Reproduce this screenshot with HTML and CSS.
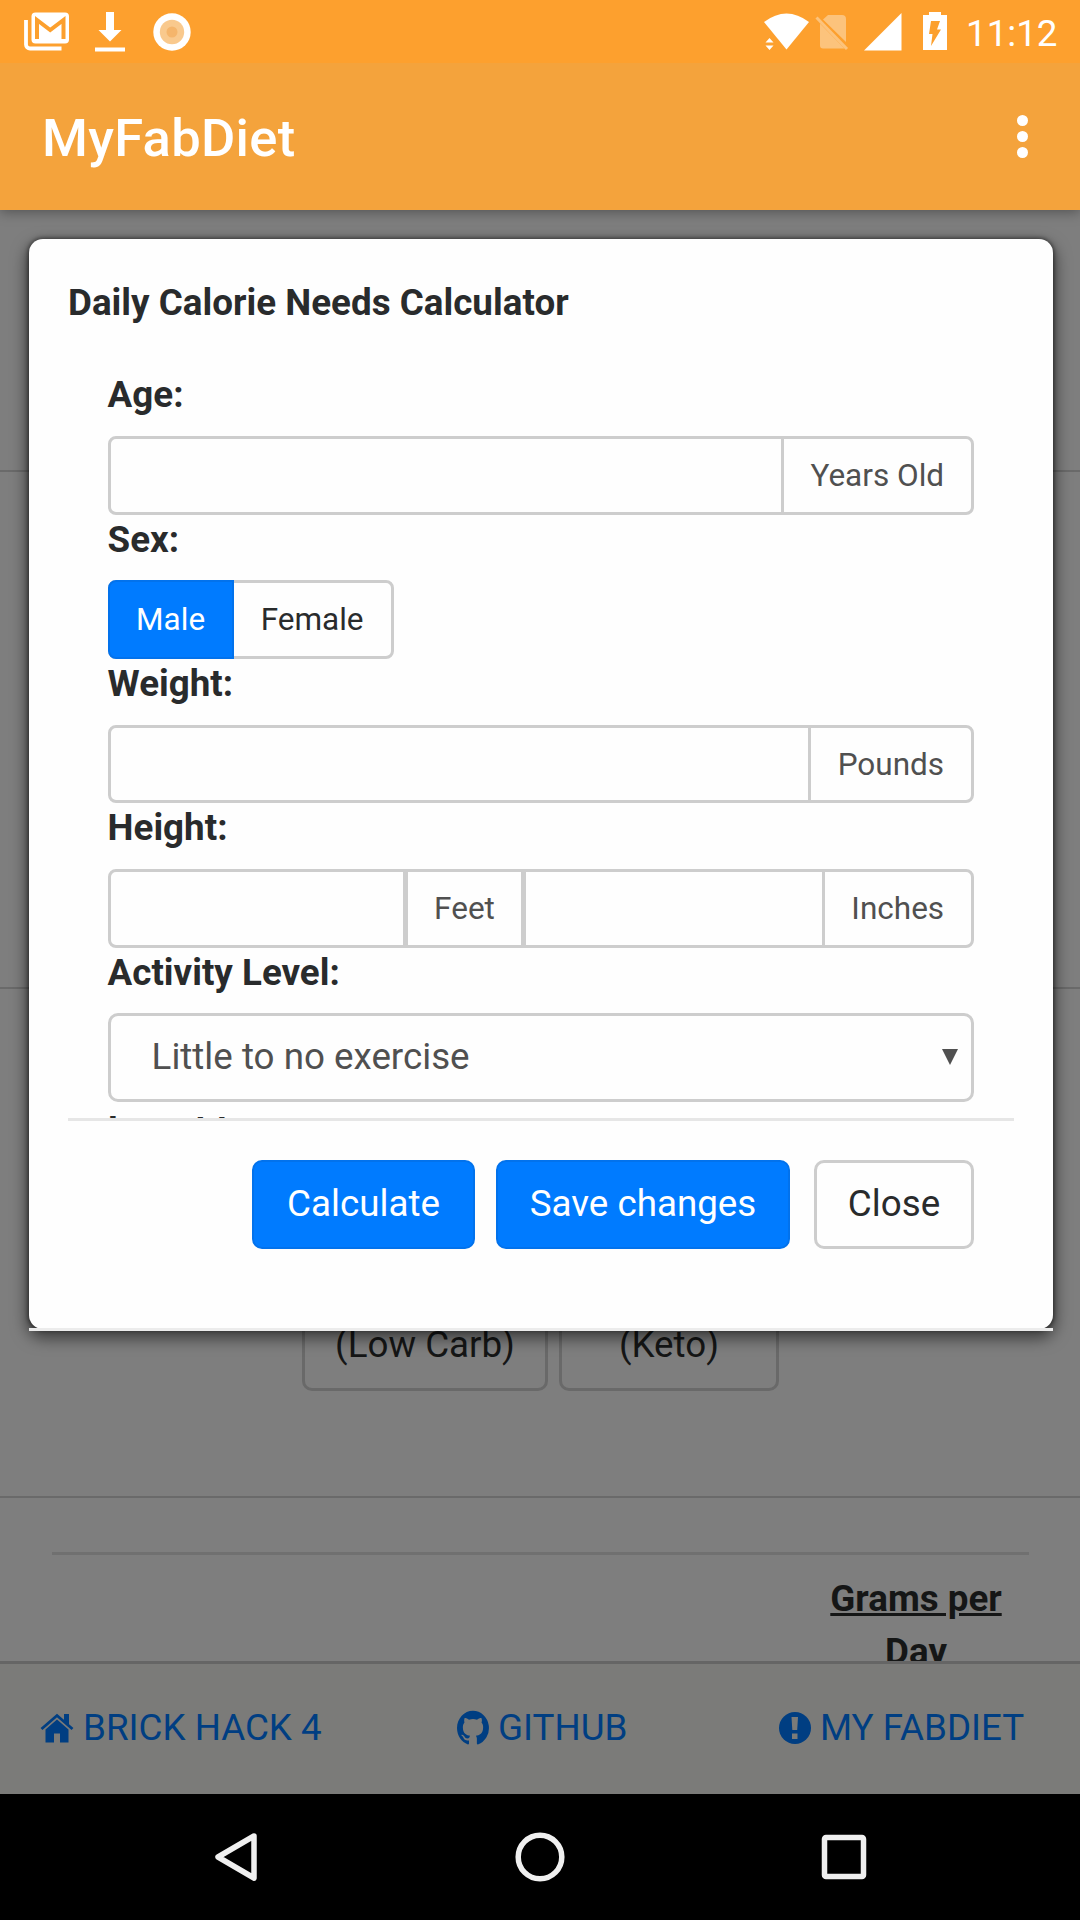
FILE: index.html
```html
<!DOCTYPE html>
<html lang="en">
<head>
<meta charset="utf-8">
<title>MyFabDiet</title>
<link rel="stylesheet" href="styles.css">
</head>
<body>
<div class="screen">
  <div class="status-bar">
    <div class="status-left">
      <svg class="icon-mail" width="46" height="40" viewBox="0 0 46 40">
        <path d="M2 8v24.500a4 4 0 0 0 4 4h31.500" fill="none" stroke="#fff" stroke-width="3.800"/>
        <rect x="7.500" y="0.500" width="37.500" height="31" rx="4" fill="#fff"/>
        <path d="M13 27V8l13.200 10L39.500 8v19" fill="none" stroke="#fca02e" stroke-width="4"/>
        <path d="M13 4.500h26.500L26.200 13.500z" fill="#fff"/>
      </svg>
      <svg class="icon-download" width="30" height="40" viewBox="0 0 30 40">
        <path d="M11 0h8v18h7.500L15 29.500 3.500 18H11zM0 35.500h30v4H0z" fill="#fff"/>
      </svg>
      <svg class="icon-record" width="38" height="38" viewBox="0 0 38 38">
        <circle cx="19" cy="19" r="18.700" fill="#fff"/>
        <circle cx="19" cy="19" r="12.200" fill="#f9c98d"/>
        <circle cx="19" cy="19" r="5.500" fill="#f5b56b"/>
      </svg>
    </div>
    <div class="status-right">
      <svg width="46" height="38" viewBox="0 0 46 38">
        <path d="M0 9Q22.500-8 45 9L22.500 36.500z" fill="#fff"/>
        <path d="M5.500 23l-6 6v8h9l3-4z" fill="#fca02e"/>
        <path d="M5.500 25l4 4.500h-8zM5.500 37l4-4.500h-8z" fill="#fff"/>
      </svg>
      <svg class="icon-nosim" width="34" height="38" viewBox="0 0 34 38">
        <path d="M13 2h14a4 4 0 0 1 4 4v23L8 6.500zM5 10.500l24.500 25H8a3 3 0 0 1-3-3z" fill="#fcc37c"/>
        <path d="M1.500 4.500L32 36" stroke="#fcc37c" stroke-width="3"/>
      </svg>
      <svg class="icon-signal" width="38" height="38" viewBox="0 0 38 38"><path d="M0 37.500L37.500 0v37.500z" fill="#fff"/></svg>
      <svg class="icon-battery" width="24" height="38" viewBox="0 0 24 38">
        <path d="M6 0h12v3h6v35H0V3h6z" fill="#fff"/>
        <path d="M8 9h9l-3 8.500h4L8 34l1.500-12H6z" fill="#fca02e"/>
      </svg>
      <span class="clock">11:12</span>
    </div>
  </div>

  <header class="app-bar">
    <h1 class="app-title">MyFabDiet</h1>
    <div class="overflow-menu"><i></i><i></i><i></i></div>
  </header>

  <main class="viewport">
    <div class="page">
      <section class="panel panel-intro"></section>
      <section class="panel panel-form"></section>
      <section class="panel panel-diets">
        <div class="diet">(Low Carb)</div>
        <div class="diet diet-keto">(Keto)</div>
      </section>
      <section class="results">
        <div class="grams">Grams per<br>Day</div>
      </section>
    </div>
    <footer class="page-footer">
      <a class="link"><svg width="34" height="34" viewBox="0 0 34 34"><path d="M17 8.500L28.500 18.500v13H20V22.500h-6v9H5.500v-13z"/><path d="M1.500 18L17 4.500l15.500 13.500" fill="none" stroke="#003e82" stroke-width="2.800"/><path d="M24 3h5v11l-5-4.500z"/></svg><span>BRICK HACK 4</span></a>
      <a class="link link-github"><svg width="32" height="36" viewBox="0 0 24 25" preserveAspectRatio="none"><path d="M12 .5C5.400.5 0 5.900 0 12.500c0 5.300 3.400 9.800 8.200 11.400.6.100.8-.3.800-.6v-2.200c-3.300.7-4-1.400-4-1.400-.6-1.400-1.400-1.800-1.400-1.800-1-.7.100-.7.100-.7 1.200.1 1.900 1.200 1.900 1.200 1 1.900 2.800 1.300 3.500 1 .1-.8.400-1.300.8-1.600-2.700-.3-5.500-1.300-5.500-5.900 0-1.300.5-2.400 1.200-3.200-.1-.3-.5-1.500.1-3.200 0 0 1-.3 3.300 1.200a11.500 11.500 0 0 1 6 0c2.300-1.500 3.300-1.200 3.300-1.200.7 1.700.2 2.900.1 3.200.8.800 1.200 1.900 1.200 3.200 0 4.600-2.800 5.600-5.500 5.900.4.400.8 1.100.8 2.200v3.300c0 .3.200.7.800.6A12 12 0 0 0 12 .5z"/></svg><span>GITHUB</span></a>
      <a class="link link-about"><svg width="32" height="34" viewBox="0 0 32 34"><circle cx="16" cy="17" r="16"/><path d="M12.500 6h6.500l-.8 13h-4.900zM13 22.500h5.500v5.500H13z" fill="#7b7b79"/></svg><span>MY FABDIET</span></a>
    </footer>

    <div class="modal">
      <h2 class="modal-title">Daily Calorie Needs Calculator</h2>
      <form class="modal-body">
        <label>Age:</label>
        <div class="group"><input type="text"><span class="addon">Years Old</span></div>
        <label>Sex:</label>
        <div class="group toggle"><span class="option active">Male</span><span class="option female">Female</span></div>
        <label>Weight:</label>
        <div class="group"><input type="text"><span class="addon">Pounds</span></div>
        <label>Height:</label>
        <div class="group"><input class="feet" type="text"><span class="addon addon-mid">Feet</span><input type="text"><span class="addon">Inches</span></div>
        <label>Activity Level:</label>
        <div class="select"><span>Little to no exercise</span><svg width="16" height="16" viewBox="0 0 16 16"><path d="M0 0h16L8 16z" fill="#505050"/></svg></div>
        <label>I want to:</label>
      </form>
      <div class="modal-footer">
        <span class="btn primary calculate">Calculate</span>
        <span class="btn primary save">Save changes</span>
        <span class="btn close">Close</span>
      </div>
    </div>
  </main>

  <nav class="system-nav">
    <svg width="50" height="52" viewBox="0 0 50 52"><path d="M43 5L7 26l36 21z"/></svg>
    <svg width="50" height="52" viewBox="0 0 50 52"><circle cx="25" cy="26" r="21.800"/></svg>
    <svg width="50" height="52" viewBox="0 0 50 52"><rect x="5.500" y="6.500" width="39" height="39" rx="1.500"/></svg>
  </nav>
</div>
</body>
</html>
```
FILE: styles.css
```css
* { box-sizing: border-box; }
body { margin: 0; font-family: Roboto, sans-serif; font-size: 36.75px; color: #292b2c; }
h1, h2 { margin: 0; }
svg { display: block; flex: none; }

.screen { width: 1080px; height: 1920px; display: flex; flex-direction: column; overflow: hidden; }

/* Android status bar */
.status-bar { position: relative; z-index: 3; height: 63px; flex: none; background: #fda02e; display: flex; justify-content: space-between; padding: 12px 21px 0 24px; }
.status-left, .status-right { display: flex; align-items: flex-start; }
.icon-download { margin-left: 25px; }
.icon-record { margin-left: 28px; margin-top: 1px; }
.status-right svg { margin-top: 1px; }
.icon-nosim { margin-left: 5px; }
.icon-signal { margin-left: 15px; }
.status-right .icon-battery { margin: 0 0 0 21px; }
.clock { margin-left: 19px; color: #fff; line-height: 43px; width: 93px; white-space: nowrap; }

/* App bar */
.app-bar { position: relative; z-index: 2; height: 147px; flex: none; background: #f4a33c; display: flex; align-items: center; justify-content: space-between; padding: 0 52px 0 42px; box-shadow: 0 2px 12px rgba(0, 0, 0, .35); }
.app-title { font-size: 52.5px; font-weight: 500; color: #fff; line-height: 60px; padding-top: 3px; letter-spacing: .3px; }
.overflow-menu { display: flex; flex-direction: column; gap: 5px; }
.overflow-menu i { width: 11px; height: 11px; border-radius: 50%; background: #fff; }

/* Dimmed page behind the dialog */
.viewport { position: relative; flex: 1; min-height: 0; display: flex; flex-direction: column; background: #7e7e7e; }
.page { flex: 1; min-height: 0; overflow: hidden; color: #151616; }
.panel { border-bottom: 2px solid #6a6a6a; }
.panel-intro { height: 262px; }
.panel-form { height: 517px; }
.panel-diets { height: 509px; display: flex; align-items: flex-end; gap: 11px; padding: 0 0 105px 302px; }
.diet { width: 246px; height: 150px; border: 3px solid #696969; border-radius: 10px; display: flex; align-items: flex-end; justify-content: center; padding-bottom: 16px; line-height: 55px; }
.diet-keto { width: 220px; }
.results { margin: 54px 51px 0 52px; border-top: 3px solid #707070; display: flex; justify-content: flex-end; }
.grams { width: 226px; padding-top: 17px; font-weight: 700; line-height: 53px; text-align: center; text-decoration: underline; }
.page-footer { height: 133px; flex: none; background: #7b7b79; border-top: 3px solid #656565; display: flex; align-items: center; padding: 0 0 3px 40px; color: #003e82; fill: #003e82; }
.link { display: flex; align-items: center; gap: 9px; width: 417px; line-height: 55px; white-space: nowrap; }
.link-github { width: 322px; }
.link-about { width: auto; }

/* Dialog */
.modal { position: absolute; left: 29px; top: 29px; width: 1024px; height: 1090px; padding: 36px 39px 0; background: #fefefe; border-radius: 14px; box-shadow: 0 7px 16px 2px rgba(0, 0, 0, .55), 0 0 4px 1px rgba(0, 0, 0, .5); }
.modal::after { content: ""; position: absolute; left: 0; right: 0; bottom: -2px; height: 3px; background: #ececec; }
.modal-title { font-size: 36.75px; font-weight: 700; line-height: 55px; letter-spacing: .02px; }
.modal-body { height: 791px; overflow: hidden; padding: 40.400px 39.600px 0; border-bottom: 3px solid #e6e6e6; }
label { display: block; height: 65.600px; line-height: 50px; font-weight: 700; }
.group { display: flex; width: 866px; height: 78.750px; border: 3px solid #cdcdcd; border-radius: 8px; font-size: 31.500px; color: #505050; }
input { flex: 1; min-width: 0; border: 0; padding: 0; background: transparent; }
.feet { flex: none; width: 292px; }
.addon { display: flex; align-items: center; padding: 0 26.500px; border-left: 3px solid #cdcdcd; white-space: nowrap; }
.addon-mid { border-left-width: 5px; border-right: 5px solid #cdcdcd; }
.toggle { width: 286px; }
.option { display: flex; align-items: center; justify-content: center; color: #292b2c; flex: 1; }
.option.active { flex: none; width: 126px; margin: -3px 0 -3px -3px; background: #007bff; color: #fff; border: 2px solid #0272ec; border-radius: 8px 0 0 8px; }
.select { display: flex; align-items: center; justify-content: space-between; width: 866px; height: 89px; margin-bottom: 3px; border: 3px solid #cdcdcd; border-radius: 10px; padding: 0 13px 2px 41px; color: #505050; }

.modal-footer { display: flex; justify-content: flex-end; padding: 39px 40px 0 0; }
.btn { height: 89px; border: 3px solid #cdcdcd; border-radius: 10px; display: flex; align-items: center; justify-content: center; padding-bottom: 2px; }
.primary { background: #007bff; border: 2px solid #0272ec; color: #fff; }
.calculate { width: 223px; }
.save { width: 294px; margin: 0 24px 0 21px; }
.close { width: 160px; }

/* Android navigation bar */
.system-nav { height: 126px; flex: none; background: #000; display: flex; align-items: center; justify-content: center; gap: 254px; }
.system-nav svg { fill: none; stroke: #f0f0f0; stroke-width: 5.500; stroke-linejoin: round; }
```
